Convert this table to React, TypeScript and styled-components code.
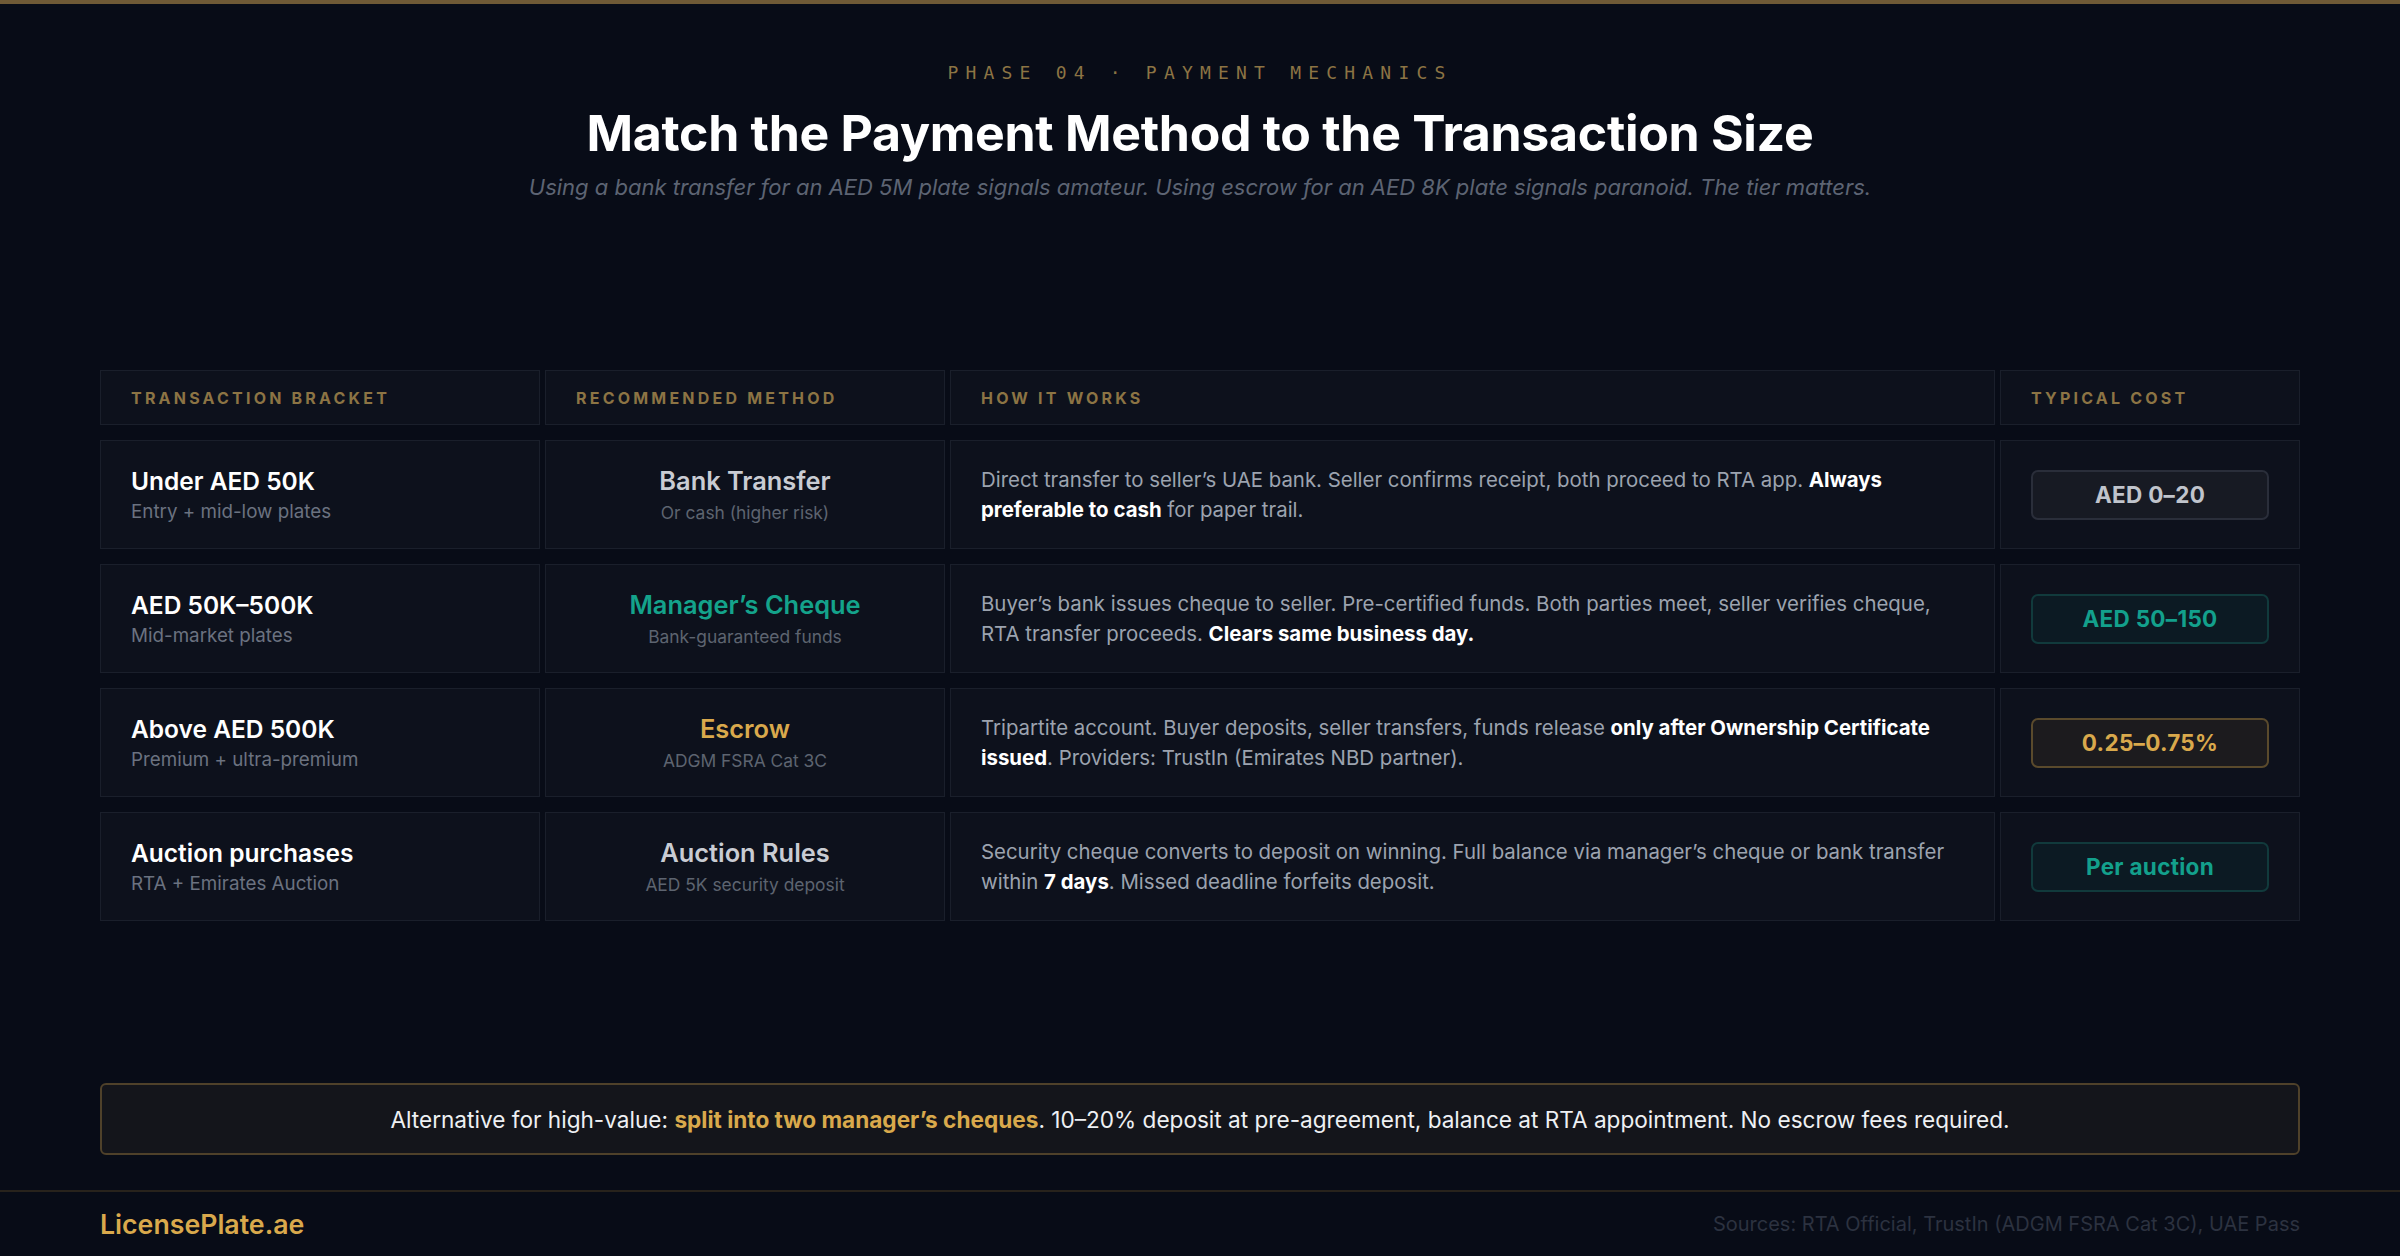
import styled, { createGlobalStyle } from "styled-components";

const GlobalStyle = createGlobalStyle`
  html, body {
    margin: 0;
    padding: 0;
    background: #080c17;
  }
  * {
    box-sizing: border-box;
  }
`;

const Page = styled.div`
  width: 2400px;
  height: 1256px;
  display: flex;
  flex-direction: column;
  background: #080c17;
  font-family: Inter, "Noto Sans", sans-serif;
  color: #e5e7eb;
  overflow: hidden;
`;

const TopBar = styled.div`
  height: 4px;
  background: #6f5a36;
  flex-shrink: 0;
`;

const Hero = styled.header`
  padding-top: 57px;
  text-align: center;
`;

const Eyebrow = styled.div`
  font-family: "DejaVu Sans Mono", "Liberation Mono", monospace;
  font-size: 18px;
  line-height: 24px;
  letter-spacing: 0.4em;
  color: #8c7444;
`;

const Title = styled.h1`
  margin: 18px 0 0;
  font-size: 50px;
  line-height: 60px;
  font-weight: 700;
  letter-spacing: -0.3px;
  color: #ffffff;
`;

const Subtitle = styled.p`
  margin: 9px 0 0;
  font-size: 22px;
  line-height: 30px;
  font-style: italic;
  color: #5d6473;
`;

const Main = styled.main`
  padding: 0 100px;
`;

const Table = styled.div`
  margin-top: 168px;
  display: flex;
  flex-direction: column;
  gap: 15px;
`;

const Row = styled.div<{ $head?: boolean }>`
  display: grid;
  grid-template-columns: 440px 400px 1fr 300px;
  gap: 5px;
  height: ${(p) => (p.$head ? "55px" : "109px")};
`;

const Cell = styled.div<{ $center?: boolean }>`
  background: #0d111c;
  border: 1px solid #1a1f2b;
  padding: 0 30px;
  display: flex;
  flex-direction: column;
  justify-content: center;
  align-items: ${(p) => (p.$center ? "center" : "flex-start")};
  text-align: ${(p) => (p.$center ? "center" : "left")};
`;

const HeadLabel = styled.span`
  font-size: 16px;
  font-weight: 700;
  letter-spacing: 0.2em;
  color: #8c7444;
  text-transform: uppercase;
`;

const Bracket = styled.div`
  font-size: 24.5px;
  line-height: 30px;
  font-weight: 600;
  color: #ffffff;
`;

const SubLabel = styled.div`
  margin-top: 4px;
  font-size: 18.8px;
  line-height: 24px;
  color: #6b7280;
`;

const Method = styled.div<{ $tone: "plain" | "teal" | "gold" }>`
  font-size: 25.4px;
  line-height: 30px;
  font-weight: 600;
  color: ${(p) =>
    p.$tone === "teal" ? "#14a38b" : p.$tone === "gold" ? "#d9a94c" : "#c9ccd3"};
`;

const MethodNote = styled.div`
  margin-top: 6px;
  font-size: 17.4px;
  line-height: 22px;
  color: #5d6470;
`;

const Explain = styled.p`
  margin: 0;
  font-size: 20.4px;
  line-height: 30px;
  color: #9ca3af;

  b {
    color: #ffffff;
    font-weight: 700;
  }
`;

const badgeTones = {
  plain: { bg: "#171a23", border: "#2a2e3a", fg: "#c0c4cc" },
  teal: { bg: "#0c1a23", border: "#113a3c", fg: "#13a08c" },
  gold: { bg: "#1c1b1e", border: "#5a4a2c", fg: "#d9a94c" },
};

const Badge = styled.div<{ $tone: keyof typeof badgeTones }>`
  width: 100%;
  height: 50px;
  display: flex;
  align-items: center;
  justify-content: center;
  border-radius: 7px;
  font-size: 22.5px;
  font-weight: 700;
  letter-spacing: 0.3px;
  background: ${(p) => badgeTones[p.$tone].bg};
  border: 2px solid ${(p) => badgeTones[p.$tone].border};
  color: ${(p) => badgeTones[p.$tone].fg};
`;

const Callout = styled.div`
  margin-top: 162px;
  height: 72px;
  display: flex;
  align-items: center;
  justify-content: center;
  background: #14151b;
  border: 2px solid #4f412a;
  border-radius: 6px;
  font-size: 22.6px;
  color: #eef0f3;

  b {
    color: #d9a94c;
    font-weight: 700;
  }
`;

const Footer = styled.footer`
  margin-top: 35px;
  flex: 1;
  border-top: 2px solid #28231c;
  padding: 0 100px;
  display: flex;
  align-items: center;
  justify-content: space-between;
`;

const Brand = styled.div`
  font-size: 26.7px;
  font-weight: 600;
  color: #d9a94c;
`;

const Sources = styled.div`
  font-size: 20px;
  color: #2c3240;
`;

type Tone = "plain" | "teal" | "gold";

const rows: {
  bracket: string;
  bracketNote: string;
  method: string;
  methodNote: string;
  tone: Tone;
  how: React.ReactNode;
  cost: string;
  costTone: Tone;
}[] = [
  {
    bracket: "Under AED 50K",
    bracketNote: "Entry + mid-low plates",
    method: "Bank Transfer",
    methodNote: "Or cash (higher risk)",
    tone: "plain",
    how: (
      <>
        Direct transfer to seller’s UAE bank. Seller confirms receipt, both proceed to RTA app.{" "}
        <b>Always preferable to cash</b> for paper trail.
      </>
    ),
    cost: "AED 0–20",
    costTone: "plain",
  },
  {
    bracket: "AED 50K–500K",
    bracketNote: "Mid-market plates",
    method: "Manager’s Cheque",
    methodNote: "Bank-guaranteed funds",
    tone: "teal",
    how: (
      <>
        Buyer’s bank issues cheque to seller. Pre-certified funds. Both parties meet, seller verifies cheque,
        RTA transfer proceeds. <b>Clears same business day.</b>
      </>
    ),
    cost: "AED 50–150",
    costTone: "teal",
  },
  {
    bracket: "Above AED 500K",
    bracketNote: "Premium + ultra-premium",
    method: "Escrow",
    methodNote: "ADGM FSRA Cat 3C",
    tone: "gold",
    how: (
      <>
        Tripartite account. Buyer deposits, seller transfers, funds release{" "}
        <b>only after Ownership Certificate issued</b>. Providers: TrustIn (Emirates NBD partner).
      </>
    ),
    cost: "0.25–0.75%",
    costTone: "gold",
  },
  {
    bracket: "Auction purchases",
    bracketNote: "RTA + Emirates Auction",
    method: "Auction Rules",
    methodNote: "AED 5K security deposit",
    tone: "plain",
    how: (
      <>
        Security cheque converts to deposit on winning. Full balance via manager’s cheque or bank transfer
        within <b>7 days</b>. Missed deadline forfeits deposit.
      </>
    ),
    cost: "Per auction",
    costTone: "teal",
  },
];

function App() {
  return (
    <Page>
      <GlobalStyle />
      <TopBar />
      <Hero>
        <Eyebrow>PHASE 04 · PAYMENT MECHANICS</Eyebrow>
        <Title>Match the Payment Method to the Transaction Size</Title>
        <Subtitle>
          Using a bank transfer for an AED 5M plate signals amateur. Using escrow for an AED 8K plate signals
          paranoid. The tier matters.
        </Subtitle>
      </Hero>
      <Main>
        <Table>
          <Row $head>
            <Cell>
              <HeadLabel>Transaction Bracket</HeadLabel>
            </Cell>
            <Cell>
              <HeadLabel>Recommended Method</HeadLabel>
            </Cell>
            <Cell>
              <HeadLabel>How It Works</HeadLabel>
            </Cell>
            <Cell>
              <HeadLabel>Typical Cost</HeadLabel>
            </Cell>
          </Row>
          {rows.map((r) => (
            <Row key={r.bracket}>
              <Cell>
                <Bracket>{r.bracket}</Bracket>
                <SubLabel>{r.bracketNote}</SubLabel>
              </Cell>
              <Cell $center>
                <Method $tone={r.tone}>{r.method}</Method>
                <MethodNote>{r.methodNote}</MethodNote>
              </Cell>
              <Cell>
                <Explain>{r.how}</Explain>
              </Cell>
              <Cell>
                <Badge $tone={r.costTone}>{r.cost}</Badge>
              </Cell>
            </Row>
          ))}
        </Table>
        <Callout>
          <span>
            Alternative for high-value: <b>split into two manager’s cheques</b>. 10–20% deposit at pre-agreement,
            balance at RTA appointment. No escrow fees required.
          </span>
        </Callout>
      </Main>
      <Footer>
        <Brand>LicensePlate.ae</Brand>
        <Sources>Sources: RTA Official, TrustIn (ADGM FSRA Cat 3C), UAE Pass</Sources>
      </Footer>
    </Page>
  );
}

export default App;
